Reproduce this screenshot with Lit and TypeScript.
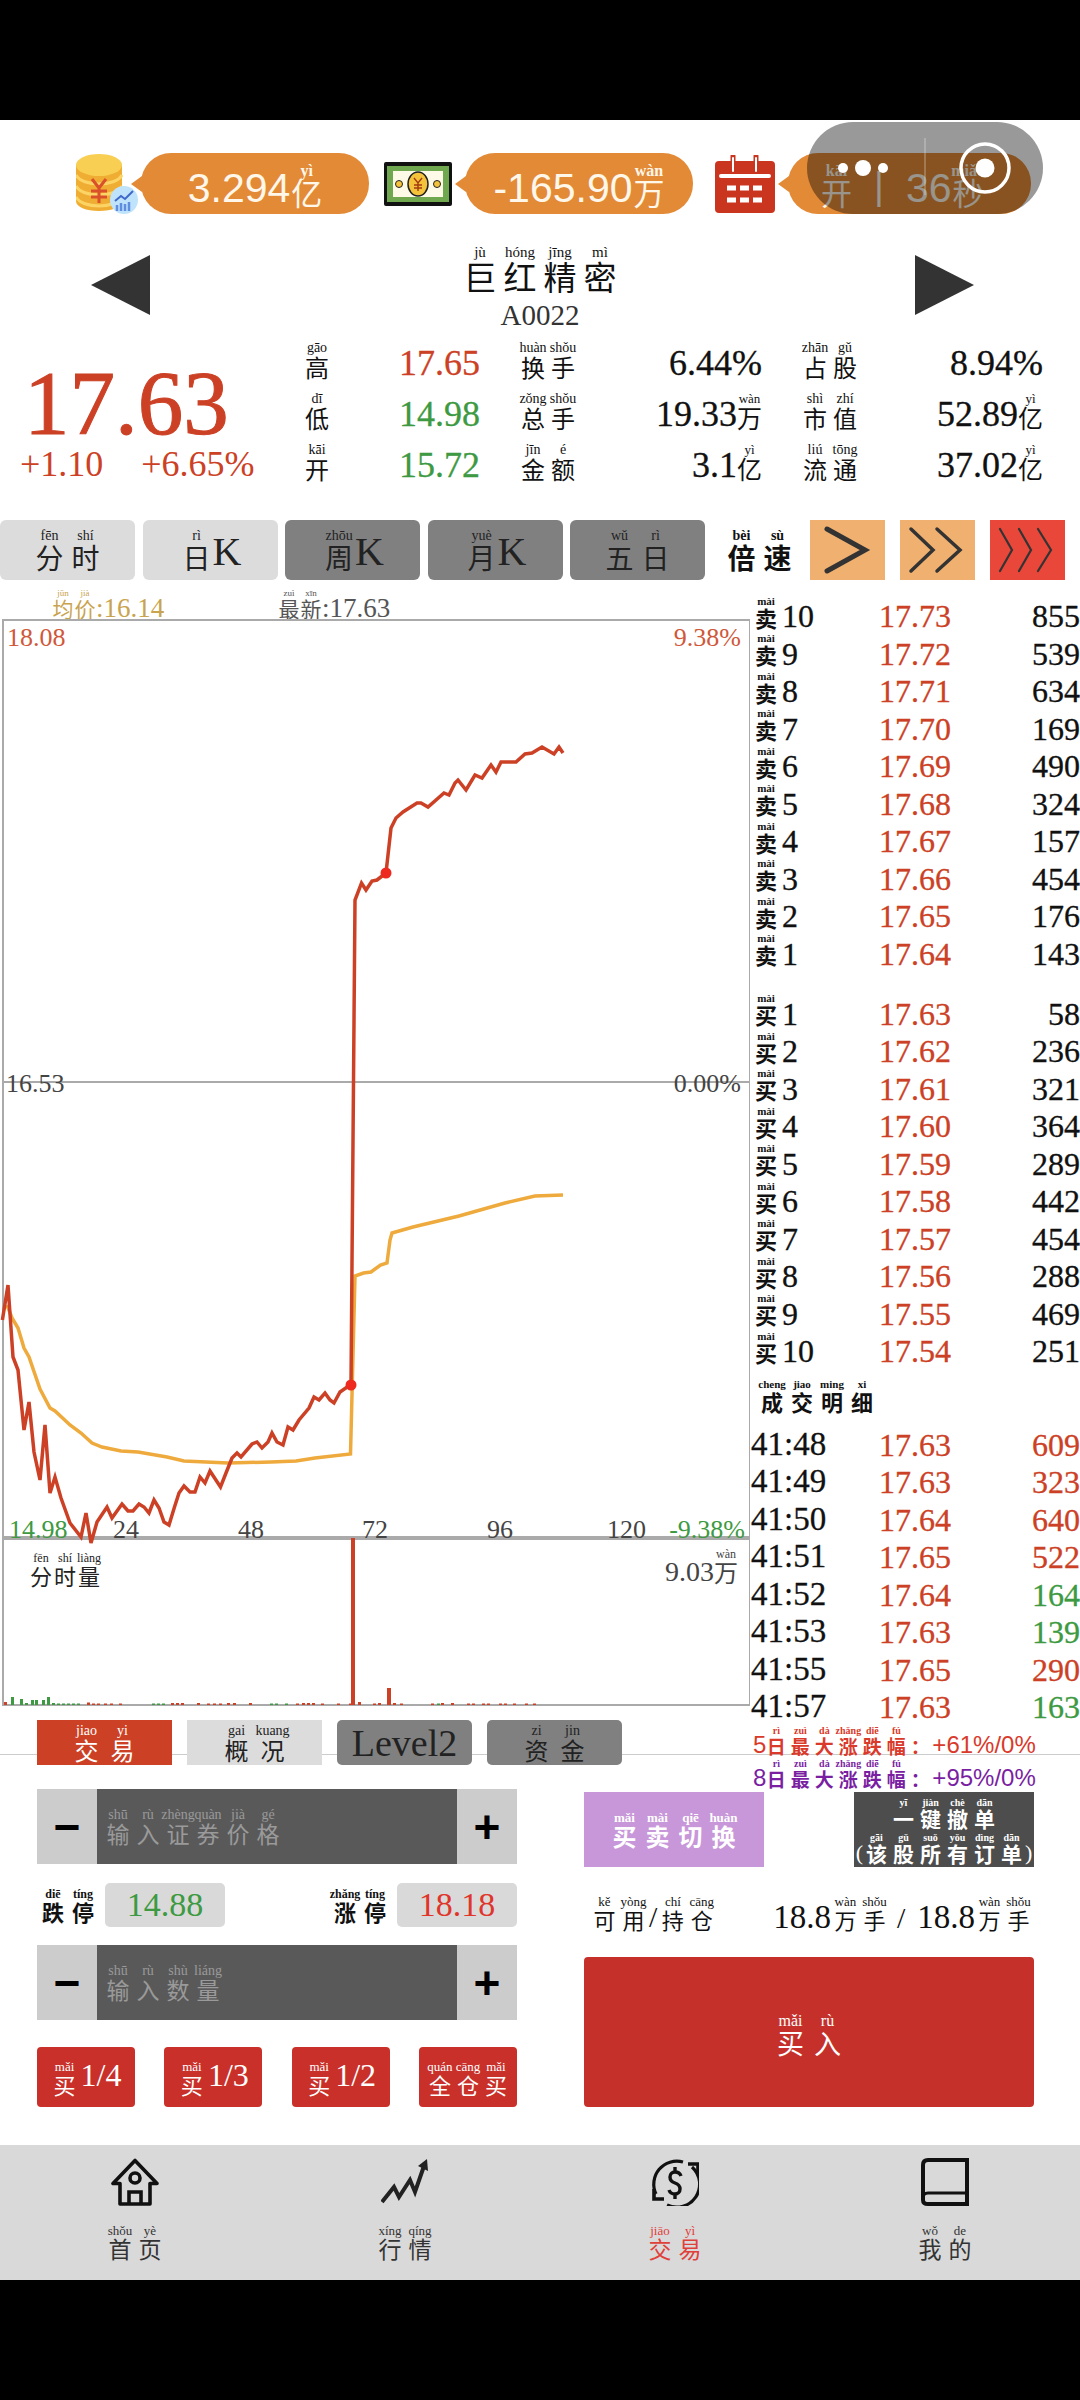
import { LitElement, html, css, svg } from "lit";
import { customElement } from "lit/decorators.js";

const Z = (chars: string, py: string, cls = "") => {
  const p = py.split(" ");
  return html`<span class="z ${cls}">${[...chars].map(
    (c, i) => html`<ruby><span class="c">${c}</span><rt>${p[i] ?? ""}</rt></ruby>`
  )}</span>`;
};

const RED = [[2.4,1320],[8,1285],[13,1357],[18,1370],[24,1430],[29,1402],[34,1452],[40,1480],[45,1425],[50,1493],[55,1477],[61,1498],[70,1523],[81,1537],[86,1513],[91,1543],[97,1522],[107,1507],[112,1518],[122,1504],[128,1511],[133,1511],[139,1504],[144,1507],[149,1513],[154,1500],[159,1508],[164,1522],[169,1525],[174.5,1507],[179,1493],[184,1486],[190,1492],[195,1492],[200,1477],[205,1483],[210,1471],[220.5,1487],[226,1473],[232,1458],[237,1453],[241,1457],[252,1444],[257,1442],[262,1448],[268,1442],[272,1433],[277,1442],[283,1445],[288,1427],[293,1430],[299,1420],[309,1408],[314,1397],[319,1400],[325,1393],[330,1400],[334,1403],[340,1392],[350,1385],[351,1385],[355,900],[361.5,883],[366,890],[372,881],[377,880],[386,873],[391,828],[396,818],[403,812],[417,803],[421,803],[428,807],[444,793],[449,795],[455,783],[458,780],[466,790],[475,775],[482,778],[491,765],[496,772],[501,762],[516,762],[525,754],[532,753],[542,747],[554,754],[559,747],[563,753]];
const YEL = [[7,1305],[12,1318],[18,1328],[24,1348],[29,1357],[40,1389],[50,1408],[55,1411],[70,1425],[81,1433],[92,1443],[102,1447],[121,1451],[138,1452],[167,1457],[184,1461],[228,1463],[271,1462],[296,1461],[315,1458],[350.5,1454],[355,1276],[363.5,1273],[371,1272],[380.5,1265],[387,1263],[390,1240],[392,1233],[413,1227],[459,1216],[505,1203],[535,1196],[563,1195]];
const pts = (a: number[][]) => a.map((p) => p.join(",")).join(" ");

const GREENB = [[11,8],[20,6],[25,2],[31,5],[35,5],[42,5],[47,8],[52,2],[57,1.5],[62,1.5],[67,1.5],[72,1.5],[77,1.5],[152,1.5],[157,1.5],[162,1.5],[270,1.5],[275,1.5],[285,1.5],[378,1.5],[437,1.5]];
const REDB = [[4,3],[87,2.5],[92,1.5],[97,1.5],[104,1.5],[110,1.5],[119,1.5],[171,2],[176,2],[181,2],[197,2],[207,1.5],[213,1.5],[219,1.5],[227,2],[233,2],[249,2],[296,1.5],[302,2],[307,2],[312,2],[321,1.5],[337,1.5],[349,1.5],[358,3],[373,1.5],[378,2],[393,2],[400,1.5],[431,1.5],[441,2],[451,2],[467,1.5],[472,1.5],[482,1.5],[487,1.5],[499,1.5],[504,1.5],[513,1.5],[525,1.5],[533,1.5]];

const ASKS = [["10","17.73","855"],["9","17.72","539"],["8","17.71","634"],["7","17.70","169"],["6","17.69","490"],["5","17.68","324"],["4","17.67","157"],["3","17.66","454"],["2","17.65","176"],["1","17.64","143"]];
const BIDS = [["1","17.63","58"],["2","17.62","236"],["3","17.61","321"],["4","17.60","364"],["5","17.59","289"],["6","17.58","442"],["7","17.57","454"],["8","17.56","288"],["9","17.55","469"],["10","17.54","251"]];
const TRADES = [["41:48","17.63","609",1],["41:49","17.63","323",1],["41:50","17.64","640",1],["41:51","17.65","522",1],["41:52","17.64","164",0],["41:53","17.63","139",0],["41:55","17.65","290",1],["41:57","17.63","163",0]];

@customElement("app-root")
export class AppRoot extends LitElement {
  static styles = css`
    :host { display:block; width:1080px; height:2400px; background:#000; position:relative; overflow:hidden;
      font-family:"Liberation Serif","Noto Sans CJK SC",serif; color:#111; }
    * { box-sizing:border-box; }
    .top { height:120px; background:#000; }
    .main { height:2160px; background:#fff; display:flex; flex-direction:column; }

    .z { display:inline-flex; align-items:flex-end; --cs:24px; --ps:14px; --cw:30px; }
    ruby { display:flex; flex-direction:column-reverse; align-items:center; width:var(--cw); flex:none; }
    ruby .c { display:block; font:var(--cs)/1 "Noto Sans CJK SC",sans-serif; }
    rt { display:block; font:var(--ps)/1 "Liberation Serif",serif; height:var(--ps); white-space:nowrap; text-align:center; }
    .bold .c, .bold rt { font-weight:700; }
    .num { display:block; line-height:.7; white-space:nowrap; }

    .hdr { height:94px; padding:33px 0 0 76px; display:flex; align-items:flex-start; flex:none; }
    .pill { position:relative; width:228px; height:61px; background:#e38a36; border-radius:30px; color:#fff7ea;
      font-family:"Liberation Sans","Noto Sans CJK SC",sans-serif; display:flex; align-items:flex-end; justify-content:center; padding-bottom:9px; }
    .pill::before { content:""; position:absolute; left:-10px; top:23px; border:8px solid transparent; border-left:0; border-right:11px solid #e38a36; }
    .pill .num { font-size:41px; font-family:"Liberation Sans",sans-serif; padding-bottom:2px; }
    .pill .z { --cs:31px; --ps:16px; --cw:31px; margin:0 0 -2px 1px; }
    .pill rt { font-weight:700; margin-bottom:-3px; }
    .ico1 { width:62px; height:62px; margin-right:3px; flex:none; }
    .ico2 { width:68px; height:44px; margin:9px 13px 0 15px; flex:none; }
    .ico3 { width:60px; height:58px; margin:2px 13px 0 22px; flex:none; }
    .pill.p3 { width:243px; justify-content:flex-start; padding-left:32px; }
    .sep { font-size:38px; line-height:.9; width:54px; text-align:center; padding-bottom:2px; flex:none; }

    .name { height:126px; padding:41px 106px 0 91px; display:flex; justify-content:space-between; flex:none; }
    .tri { width:59px; height:60px; flex:none; }
    .title { display:flex; flex-direction:column; align-items:center; margin:-10px 0 0 15px; }
    .title .z { --cs:33px; --ps:15px; --cw:40px; }
    .code { font-size:29px; line-height:1; color:#333; margin-top:8px; }

    .stats { height:146px; display:flex; flex:none; }
    .price { width:306px; padding:32px 0 0 20px; flex:none; color:#cc4125; }
    .big { font-size:91px; line-height:.7; margin-left:4px; height:64px; -webkit-text-stroke:1px #cc4125; }
    .chg { display:flex; font-size:36px; line-height:.7; gap:38px; margin-top:16px; white-space:nowrap; }
    .grid { display:grid; grid-template-columns:60px 114px 98px 184px 98px 183px; grid-auto-rows:37px; row-gap:14px; font-size:36px; margin-top:2px; }
    .grid .lb { align-self:end; }
    .grid .lf { margin-left:-4px; }
    .grid .rl { justify-self:end; }
    .grid .v { justify-self:end; align-self:end; display:flex; align-items:flex-end; padding-bottom:3px; }
    .grid .v .z { --cs:25px; --ps:13px; --cw:25px; margin-bottom:-3px; }
    .grid .num, .row .num { -webkit-text-stroke:.3px currentColor; }
    .red { color:#cc4125; } .grn { color:#3d9a42; }

    .period { margin-top:34px; height:60px; display:flex; flex:none; }
    .pb { width:135px; height:60px; margin-right:7.5px; border-radius:6px; display:flex; align-items:center; justify-content:center; background:#dcdcdc; color:#222; flex:none; }
    .pb.dk { background:#808080; }
    .pb .z { --cs:28px; --ps:14px; --cw:36px; }
    .pb .k { font-size:40px; line-height:.7; margin-left:-2px; padding-bottom:5px; }
    .inl { display:flex; align-items:flex-end; }
    .speedl { margin-left:11px; width:86px; display:flex; align-items:center; flex:none; }
    .speedl .z { --cs:28px; --ps:14px; --cw:36px; }
    .speedl .c, .speedl rt { font-weight:700; }
    .sp { width:75px; height:60px; margin-right:15px; background:#f0b070; flex:none; display:block; }
    .sp.hot { background:#e8473a; }

    .mid { display:flex; height:1199px; flex:none; margin-top:10px;
      background:linear-gradient(#ccc,#ccc) 0 1164px / 100% 1px no-repeat; }
    .left { width:750px; flex:none; }
    .legend { height:29px; display:flex; align-items:flex-end; padding-left:52px; font-size:27px; color:#555; }
    .legend .z { --cs:21px; --ps:9px; --cw:22px; }
    .legend .num { padding-bottom:1px; }
    .legend .a { width:226px; display:flex; align-items:flex-end; color:#c9a44f; flex:none; }
    .legend .b { display:flex; align-items:flex-end; }
    .chart { position:relative; width:750px; height:1087px; }
    .chart svg { display:block; }
    .chart text { font-family:"Liberation Serif",serif; font-size:26px; }
    .vl { position:absolute; left:29px; top:929px; color:#222; }
    .vl .z { --cs:22px; --ps:12px; --cw:24px; }
    .vr { position:absolute; right:12px; top:929px; display:flex; align-items:flex-end; font-size:28px; color:#444; }
    .vr .z { --cs:24px; --ps:12px; --cw:24px; margin-bottom:-2px; }
    .tabs { display:flex; gap:15px; padding:14px 0 0 37px; }
    .tb { width:135px; height:45px; background:#dcdcdc; color:#222; display:flex; align-items:center; justify-content:center; flex:none; }
    .tb.on { background:#cc4125; color:#fff; }
    .tb.dk { background:#808080; border-radius:5px; }
    .tb .z { --cs:24px; --ps:14px; --cw:36px; }
    .tb .lv { font-size:38px; line-height:1; }

    .right { width:330px; flex:none; padding-top:2px; }
    .row { height:37.5px; display:grid; grid-template-columns:125px 1fr auto; align-items:end; padding:0 0 2px 4px; font-size:32px; }
    .row .lb { display:flex; align-items:flex-end; }
    .row .z { --cs:22px; --ps:10px; --cw:24px; }
    .row .z rt { font-weight:700; font-size:11px; }
    .row .z .c { font-weight:700; }
    .row .lb .num { margin-left:4px; }
    .gap { height:22.5px; }
    .dt { padding:9.5px 0 8.5px 7px; }
    .dt .z { --cs:22px; --ps:11px; --cw:30px; }
    .row.tr { padding-left:1px; grid-template-columns:128px 1fr auto; }
    .row.tr .t { font-size:33px; }
    .mx { display:flex; align-items:flex-end; padding-left:3px; height:33px; }
    .mx.first { margin-top:6px; height:28px; }
    .mx .z { --cs:19px; --ps:10px; --cw:24px; }
    .mx .num { font-family:"Liberation Sans",sans-serif; font-size:24px; }
    .mx .d { margin-right:-2px; margin-bottom:1px; }
    .mx .pct { margin-bottom:1px; }
    .mx.r { color:#d93a2b; } .mx.p { color:#7a1fa2; }

    .trade { display:flex; padding-left:37px; flex:none; }
    .tl { width:480px; flex:none; display:flex; flex-direction:column; }
    .stp { height:75px; display:flex; flex:none; }
    .stp .bt { width:60px; background:#ccc; display:flex; align-items:center; justify-content:center; flex:none;
      font:700 46px/1 "Liberation Sans",sans-serif; color:#000; }
    .stp .in { flex:1; background:#595959; color:#9a9a9a; display:flex; align-items:center; padding:0 0 1px 6px; }
    .stp .z { --cs:23px; --ps:14px; --cw:30px; }
    .lim { height:44px; margin:19px 0 18px; display:flex; justify-content:space-between; flex:none; }
    .lg { display:flex; gap:7px; align-items:flex-end; }
    .lg .z { --cs:22px; --ps:12px; --cw:30px; margin-bottom:5px; }
    .lg .box { width:120px; height:44px; background:#d9d9d9; border-radius:5px; display:flex; align-items:center; justify-content:center; font-size:34px; line-height:1; }
    .lg .lz { padding-left:1px; }
    .qs { display:flex; justify-content:space-between; margin-top:27px; }
    .qb { width:98px; height:60px; background:#c9302a; border-radius:4px; color:#fff; display:flex; align-items:center; justify-content:center; flex:none; font-size:32px; }
    .qb .z { --cs:22px; --ps:13px; --cw:28px; }
    .qb .num { margin-left:2px; padding-bottom:3px; }
    .tr-r { margin-left:67px; width:451px; padding-top:3px; flex:none; }
    .act { display:flex; justify-content:space-between; width:450px; }
    .sw { width:180px; height:75px; background:#c797d9; color:#fff; display:flex; align-items:center; justify-content:center; }
    .sw .z { --cs:24px; --ps:13px; --cw:33px; }
    .cc { width:180px; height:75px; background:#4d4d4d; color:#fff; display:flex; flex-direction:column; align-items:center; justify-content:flex-end; gap:4px; padding-bottom:3px; }
    .cc .z { --cs:21px; --ps:10px; --cw:27px; }
    .cc .ln { display:flex; align-items:flex-end; }
    .cc .pr { font:22px/1 "Liberation Serif",serif; }
    .av { height:90px; display:flex; align-items:flex-end; justify-content:space-between; padding:0 2px 27px 6px; font-size:33px; }
    .av .l,.av .v { display:flex; align-items:flex-end; }
    .av .z { --cs:22px; --ps:13px; --cw:29px; }
    .av .sl { font-size:30px; line-height:.8; padding:0 1px; }
    .av .v .sl { padding:0 12px 0 8px; }
    .av .num { padding-bottom:1px; }
    .buy { width:450px; height:150px; background:#c5312a; border-radius:4px; color:#fff; display:flex; align-items:center; justify-content:center; padding-top:4px; }
    .buy .z { --cs:27px; --ps:16px; --cw:37px; }

    .nav { height:135px; margin-top:38px; background:#d9d9d9; display:flex; flex:none; }
    .nt { width:270px; display:flex; flex-direction:column; align-items:center; padding-top:13px; color:#333; flex:none; }
    .nt svg { width:48px; height:48px; display:block; }
    .nt .z { --cs:23px; --ps:13px; --cw:30px; margin-top:18px; }
    .nt.on { color:#e0403a; }
    .bot { height:120px; background:#000; }

    .capsule { position:absolute; left:807px; top:122px; width:236px; height:92px; border-radius:46px; background:rgba(0,0,0,.4); }
    .capsule svg { display:block; }
  `;

  render() {
    return html`
      <div class="top"></div>
      <div class="main">
        <div class="hdr">
          <svg class="ico1" viewBox="0 0 62 62">
            <path d="M0 12h46v36c0 6-10 10-23 10S0 54 0 48z" fill="#f0ad33"/>
            <path d="M0 22c3 6 13 9 23 9s20-3 23-9M0 33c3 6 13 9 23 9s20-3 23-9M0 44c3 6 13 9 23 9s20-3 23-9" fill="none" stroke="#fbd465" stroke-width="3"/>
            <ellipse cx="23" cy="12" rx="23" ry="11" fill="#f8cf52"/>
            <path d="M16 26l7 9 7-9M23 35v15M15 38h16M15 44h16" fill="none" stroke="#d9502a" stroke-width="3"/>
            <circle cx="48" cy="47" r="14" fill="#bfe3fa"/>
            <path d="M39 48l6-5 4 3 8-8" fill="none" stroke="#3f69c9" stroke-width="2"/>
            <path d="M41 58v-6M45 58v-8M49 58v-7M53 58v-9" stroke="#5f8de0" stroke-width="2.5"/>
          </svg>
          <div class="pill"><span class="num">3.294</span>${Z("亿", "yì")}</div>
          <svg class="ico2" viewBox="0 0 68 44">
            <rect width="68" height="44" rx="2" fill="#111"/>
            <rect x="3" y="4" width="62" height="36" fill="#6fa84f"/>
            <path d="M9 9h50v26H9z" fill="#fdfbe8"/>
            <ellipse cx="34" cy="22" rx="10" ry="12" fill="#f5c33b" stroke="#222" stroke-width="1.5"/>
            <path d="M30 16l4 5 4-5M34 21v8M30 23h8M30 26h8" fill="none" stroke="#a23b12" stroke-width="1.4"/>
            <circle cx="15" cy="22" r="3.5" fill="#f5c33b" stroke="#222"/><circle cx="53" cy="22" r="3.5" fill="#f5c33b" stroke="#222"/>
          </svg>
          <div class="pill"><span class="num">-165.90</span>${Z("万", "wàn")}</div>
          <svg class="ico3" viewBox="0 0 60 58">
            <rect y="6" width="60" height="52" rx="4" fill="#c9351f"/>
            <path d="M18 1v15M41 1v15" stroke="#c9351f" stroke-width="5" stroke-linecap="round"/>
            <path d="M18 3v13M41 3v13" stroke="#fff" stroke-width="2" stroke-linecap="round"/>
            <rect x="4" y="19" width="52" height="4" rx="2" fill="#fff"/>
            <path d="M12 33h35M12 45h35" stroke="#fff" stroke-width="5" stroke-dasharray="9 4"/>
          </svg>
          <div class="pill p3">${Z("开", "kāi")}<span class="sep">|</span><span class="inl"><span class="num">36</span>${Z("秒", "miǎo")}</span></div>
        </div>

        <div class="name">
          <svg class="tri" viewBox="0 0 59 60"><path d="M59 0v60L0 30z" fill="#333"/></svg>
          <div class="title">${Z("巨红精密", "jù hóng jīng mì")}<div class="code">A0022</div></div>
          <svg class="tri" viewBox="0 0 59 60"><path d="M0 0v60l59-30z" fill="#333"/></svg>
        </div>

        <div class="stats">
          <div class="price">
            <div class="big">17.63</div>
            <div class="chg"><span>+1.10</span><span>+6.65%</span></div>
          </div>
          <div class="grid">
            <div class="lb lf">${Z("高", "gāo")}</div><div class="v red"><span class="num">17.65</span></div>
            <div class="lb rl">${Z("换手", "huàn shǒu")}</div><div class="v"><span class="num">6.44%</span></div>
            <div class="lb rl">${Z("占股", "zhān gǔ")}</div><div class="v"><span class="num">8.94%</span></div>
            <div class="lb lf">${Z("低", "dī")}</div><div class="v grn"><span class="num">14.98</span></div>
            <div class="lb rl">${Z("总手", "zǒng shǒu")}</div><div class="v"><span class="num">19.33</span>${Z("万", "wàn")}</div>
            <div class="lb rl">${Z("市值", "shì zhí")}</div><div class="v"><span class="num">52.89</span>${Z("亿", "yì")}</div>
            <div class="lb lf">${Z("开", "kāi")}</div><div class="v grn"><span class="num">15.72</span></div>
            <div class="lb rl">${Z("金额", "jīn é")}</div><div class="v"><span class="num">3.1</span>${Z("亿", "yì")}</div>
            <div class="lb rl">${Z("流通", "liú tōng")}</div><div class="v"><span class="num">37.02</span>${Z("亿", "yì")}</div>
          </div>
        </div>

        <div class="period">
          <div class="pb">${Z("分时", "fēn shí")}</div>
          <div class="pb"><span class="inl">${Z("日", "rì")}<span class="num k">K</span></span></div>
          <div class="pb dk"><span class="inl">${Z("周", "zhōu")}<span class="num k">K</span></span></div>
          <div class="pb dk"><span class="inl">${Z("月", "yuè")}<span class="num k">K</span></span></div>
          <div class="pb dk">${Z("五日", "wǔ rì")}</div>
          <div class="speedl">${Z("倍速", "bèi sù")}</div>
          <svg class="sp" viewBox="0 0 75 60"><path d="M17 9l38 21-38 21" fill="none" stroke="#333" stroke-width="5" stroke-linecap="round"/></svg>
          <svg class="sp" viewBox="0 0 75 60"><path d="M11 9l22 21-22 21M37 9l23 21-23 21" fill="none" stroke="#333" stroke-width="3.5" stroke-linecap="round"/></svg>
          <svg class="sp hot" viewBox="0 0 75 60"><path d="M10 9l12 21-12 21M29 9l12 21-12 21M48 9l13 21-13 21" fill="none" stroke="#333" stroke-width="2.2" stroke-linecap="round"/></svg>
        </div>

        <div class="mid">
          <div class="left">
            <div class="legend">
              <div class="a">${Z("均价", "jūn jià")}<span class="num">:16.14</span></div>
              <div class="b">${Z("最新", "zuì xīn")}<span class="num">:17.63</span></div>
            </div>
            <div class="chart">
              <svg width="750" height="1087" viewBox="0 619 750 1087">
                <rect x="3" y="620" width="747" height="1085" fill="none" stroke="#aaa" stroke-width="2"/>
                <path d="M3 1082H750" stroke="#aaa" stroke-width="2"/>
                <path d="M3 1537H750M3 1539H750" stroke="#aaa" stroke-width="2"/>
                <text x="7" y="646" fill="#d0583a">18.08</text>
                <text x="741" y="646" fill="#d0583a" text-anchor="end">9.38%</text>
                <text x="6" y="1092" fill="#444">16.53</text>
                <text x="741" y="1092" fill="#444" text-anchor="end">0.00%</text>
                <polyline points="${pts(YEL)}" fill="none" stroke="#eeaa3c" stroke-width="3.5"/>
                <polyline points="${pts(RED)}" fill="none" stroke="#cc4125" stroke-width="3.5"/>
                <circle cx="386" cy="873" r="5.5" fill="#ee2a20"/>
                <circle cx="351" cy="1385" r="5.5" fill="#ee2a20"/>
                <text x="9" y="1538" fill="#3d9a42">14.98</text>
                <text x="113" y="1538" fill="#444">24</text>
                <text x="238" y="1538" fill="#444">48</text>
                <text x="362" y="1538" fill="#444">72</text>
                <text x="487" y="1538" fill="#444">96</text>
                <text x="607" y="1538" fill="#444">120</text>
                <text x="745" y="1538" fill="#3d9a42" text-anchor="end">-9.38%</text>
                <rect x="351" y="1538" width="4" height="167" fill="#cc4125"/>
                <rect x="387" y="1688" width="4" height="17" fill="#cc4125"/>
                ${GREENB.map((b) => svg`<rect x="${b[0]}" y="${1705 - b[1]}" width="3" height="${b[1]}" fill="#3d9a42"/>`)}
                ${REDB.map((b) => svg`<rect x="${b[0]}" y="${1705 - b[1]}" width="3" height="${b[1]}" fill="#cc4125"/>`)}
              </svg>
              <div class="vl">${Z("分时量", "fēn shí liàng")}</div>
              <div class="vr"><span class="num">9.03</span>${Z("万", "wàn")}</div>
            </div>
            <div class="tabs">
              <div class="tb on">${Z("交易", "jiao yi")}</div>
              <div class="tb">${Z("概况", "gai kuang")}</div>
              <div class="tb dk"><span class="lv">Level2</span></div>
              <div class="tb dk">${Z("资金", "zi jin")}</div>
            </div>
          </div>
          <div class="right">
            ${ASKS.map((r) => html`<div class="row"><div class="lb">${Z("卖", "mài")}<span class="num">${r[0]}</span></div><span class="num red">${r[1]}</span><span class="num">${r[2]}</span></div>`)}
            <div class="gap"></div>
            ${BIDS.map((r) => html`<div class="row"><div class="lb">${Z("买", "mài")}<span class="num">${r[0]}</span></div><span class="num red">${r[1]}</span><span class="num">${r[2]}</span></div>`)}
            <div class="dt">${Z("成交明细", "cheng jiao ming xi", "bold")}</div>
            ${TRADES.map((r) => html`<div class="row tr"><span class="num t">${r[0]}</span><span class="num red">${r[1]}</span><span class="num ${r[3] ? "red" : "grn"}">${r[2]}</span></div>`)}
            <div class="mx r first"><span class="num d">5</span>${Z("日最大涨跌幅：", "rì zuì dà zhǎng diē fú", "bold")}<span class="num pct">+61%/0%</span></div>
            <div class="mx p"><span class="num d">8</span>${Z("日最大涨跌幅：", "rì zuì dà zhǎng diē fú", "bold")}<span class="num pct">+95%/0%</span></div>
          </div>
        </div>

        <div class="trade">
          <div class="tl">
            <div class="stp"><div class="bt">−</div><div class="in">${Z("输入证券价格", "shū rù zhèng quàn jià gé")}</div><div class="bt">+</div></div>
            <div class="lim">
              <div class="lg"><span class="lz">${Z("跌停", "diē tíng", "bold")}</span><div class="box grn">14.88</div></div>
              <div class="lg">${Z("涨停", "zhǎng tíng", "bold")}<div class="box" style="color:#e0352b">18.18</div></div>
            </div>
            <div class="stp"><div class="bt">−</div><div class="in">${Z("输入数量", "shū rù shù liáng")}</div><div class="bt">+</div></div>
            <div class="qs">
              <div class="qb">${Z("买", "mǎi")}<span class="num">1/4</span></div>
              <div class="qb">${Z("买", "mǎi")}<span class="num">1/3</span></div>
              <div class="qb">${Z("买", "mǎi")}<span class="num">1/2</span></div>
              <div class="qb">${Z("全仓买", "quán cāng mǎi")}</div>
            </div>
          </div>
          <div class="tr-r">
            <div class="act">
              <div class="sw">${Z("买卖切换", "mǎi mài qiē huàn", "bold")}</div>
              <div class="cc">
                ${Z("一键撤单", "yī jiàn chè dān", "bold")}
                <div class="ln"><span class="pr">(</span>${Z("该股所有订单", "gāi gǔ suǒ yǒu dìng dān", "bold")}<span class="pr">)</span></div>
              </div>
            </div>
            <div class="av">
              <div class="l">${Z("可用", "kě yòng")}<span class="num sl">/</span>${Z("持仓", "chí cāng")}</div>
              <div class="v"><span class="num">18.8</span>${Z("万手", "wàn shǒu")}<span class="num sl">/</span><span class="num">18.8</span>${Z("万手", "wàn shǒu")}</div>
            </div>
            <div class="buy">${Z("买入", "mǎi rù")}</div>
          </div>
        </div>

        <div class="nav">
          <div class="nt">
            <svg viewBox="0 0 48 48" fill="none" stroke="#111" stroke-width="3.6">
              <path d="M24 2.5L2 25.5h7V46h30V25.5h7z" stroke-linejoin="round"/>
              <circle cx="24" cy="20" r="5"/>
              <path d="M18 46V34h12v12"/>
            </svg>
            ${Z("首页", "shǒu yè")}
          </div>
          <div class="nt">
            <svg viewBox="0 0 48 48" fill="none" stroke="#222" stroke-width="4">
              <path d="M1 44l12-15 5 10 11-17 5 12 9-26"/>
              <path d="M37 8l9-7 1 12z" fill="#222" stroke="none"/>
            </svg>
            ${Z("行情", "xíng qíng")}
          </div>
          <div class="nt on">
            <svg viewBox="0 0 48 48" fill="none" stroke="#111" stroke-width="3.2">
              <path d="M32 4A23 23 0 0 0 5 36"/>
              <path d="M16 47A23 23 0 0 0 41 9"/>
              <path d="M3 31v10h10M37 6h10v11" stroke-width="3.6"/>
              <path d="M30 18c-1-3-3-4-6-4s-5 2-5 5 2 5 5 6 5 3 5 6-2 5-5 5-5-1-6-4M24 9v5M24 36v5" stroke-width="3.4"/>
            </svg>
            ${Z("交易", "jiāo yì")}
          </div>
          <div class="nt">
            <svg viewBox="0 0 48 48" fill="none" stroke="#111" stroke-width="4">
              <path d="M46 2H7Q2 2 2 7v35q0 4 5 4h39z"/>
              <path d="M2 40q0-5 5-5h39" stroke-width="3.2"/>
            </svg>
            ${Z("我的", "wǒ de")}
          </div>
        </div>
      </div>
      <div class="bot"></div>

      <div class="capsule">
        <svg width="236" height="92" viewBox="0 0 236 92" fill="#fff">
          <circle cx="36" cy="46" r="5"/><circle cx="56" cy="46" r="8"/><circle cx="76" cy="46" r="5"/>
          <path d="M118 16v57" stroke="#fff" stroke-opacity=".3" stroke-width="1.5"/>
          <circle cx="178" cy="46" r="24" fill="none" stroke="#fff" stroke-width="3.5"/>
          <circle cx="178" cy="46" r="9.5"/>
        </svg>
      </div>
    `;
  }
}
